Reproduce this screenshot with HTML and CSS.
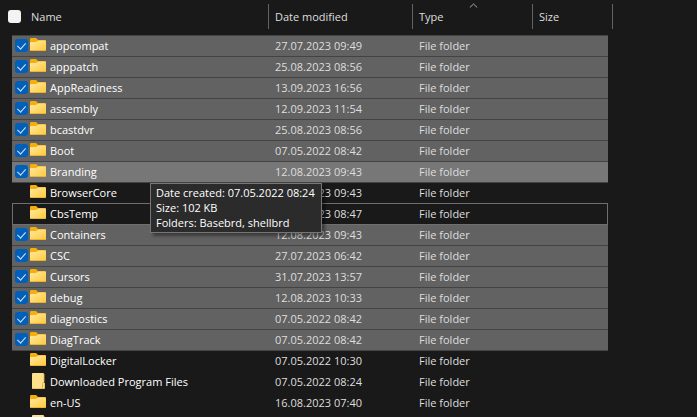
FILE: index.html
```html
<!DOCTYPE html>
<html lang="en">
<head>
    <meta charset="UTF-8">
    <meta name="viewport" content="width=device-width, initial-scale=1.0">
    <title>Windows</title>
    <link rel="stylesheet" href="styles.css">
</head>
<body>
    <!-- Icons -->
    <svg class="sprite" width="0" height="0">
        <defs>
            <linearGradient id="front" x1="0" y1="0" x2="1" y2="1">
                <stop offset="0" stop-color="#ffe9a2"/>
                <stop offset="1" stop-color="#ffc937"/>
            </linearGradient>
            <symbol id="folder" viewBox="0 1 16 16">
                <path d="M0 3.2Q0 2 1.2 2H5.6Q6.2 2 6.7 2.5L8 4H14.8Q16 4 16 5V9H0Z" fill="#f5ae0b"/>
                <path d="M0 6.8Q0 6 1 6H5.6Q6.3 6 6.8 5.6L7.6 5Q8 4.6 8.7 4.6H15Q16 4.6 16 5.6V14Q16 15 15 15H1Q0 15 0 14Z" fill="url(#front)"/>
                <path d="M.5 14.5H15.5" stroke="#e9ad27" stroke-width=".8"/>
            </symbol>
            <symbol id="special" viewBox="0 0 16 16">
                <path d="M2 1Q2 0 3 0H13Q14 0 14 1V10H15V14.5Q15 16 13.5 16H3Q2 16 2 15Z" fill="#fee08b"/>
                <path d="M12.5 15.5V10.5Q12.5 9.5 13.5 9.5H14V1" fill="none" stroke="#dcb043" stroke-width=".9"/>
                <path d="M2.5 15.5H13.5Q14.5 15.5 14.5 14.5V10" fill="none" stroke="#e8bd50" stroke-width=".8"/>
            </symbol>
        </defs>
    </svg>

    <table class="files">
        <colgroup>
            <col class="col-edge">
            <col class="col-name">
            <col class="col-date">
            <col class="col-type">
            <col class="col-size">
            <col class="col-end">
        </colgroup>
        <thead>
            <tr>
                <th colspan="2"><div class="head"><input type="checkbox" class="check" aria-label="Select all"><button>Name</button></div></th>
                <th><div class="head"><button>Date modified</button></div></th>
                <th>
                    <svg class="sort" width="9" height="5" viewBox="0 0 9 5"><path d="M.8 4.5L4.5 1L8.2 4.5" fill="none" stroke="#a8a8a8"/></svg>
                    <div class="head"><button>Type</button></div>
                </th>
                <th colspan="2"><div class="head"><button>Size</button></div></th>
            </tr>
        </thead>
        <tbody>
            <tr class="selected">
                <td></td>
                <td><label class="name"><input type="checkbox" class="check" checked><svg class="icon"><use href="#folder"/></svg>appcompat</label></td>
                <td>27.07.2023 09:49</td><td>File folder</td><td></td><td></td>
            </tr>
            <tr class="selected">
                <td></td>
                <td><label class="name"><input type="checkbox" class="check" checked><svg class="icon"><use href="#folder"/></svg>apppatch</label></td>
                <td>25.08.2023 08:56</td><td>File folder</td><td></td><td></td>
            </tr>
            <tr class="selected">
                <td></td>
                <td><label class="name"><input type="checkbox" class="check" checked><svg class="icon"><use href="#folder"/></svg>AppReadiness</label></td>
                <td>13.09.2023 16:56</td><td>File folder</td><td></td><td></td>
            </tr>
            <tr class="selected">
                <td></td>
                <td><label class="name"><input type="checkbox" class="check" checked><svg class="icon"><use href="#folder"/></svg>assembly</label></td>
                <td>12.09.2023 11:54</td><td>File folder</td><td></td><td></td>
            </tr>
            <tr class="selected">
                <td></td>
                <td><label class="name"><input type="checkbox" class="check" checked><svg class="icon"><use href="#folder"/></svg>bcastdvr</label></td>
                <td>25.08.2023 08:56</td><td>File folder</td><td></td><td></td>
            </tr>
            <tr class="selected">
                <td></td>
                <td><label class="name"><input type="checkbox" class="check" checked><svg class="icon"><use href="#folder"/></svg>Boot</label></td>
                <td>07.05.2022 08:42</td><td>File folder</td><td></td><td></td>
            </tr>
            <tr class="selected hovered">
                <td></td>
                <td>
                    <label class="name"><input type="checkbox" class="check" checked><svg class="icon"><use href="#folder"/></svg>Branding</label>
                    <div class="tooltip" role="tooltip">Date created: 07.05.2022 08:24<br>Size: 102 KB<br>Folders: Basebrd, shellbrd</div>
                </td>
                <td>12.08.2023 09:43</td><td>File folder</td><td></td><td></td>
            </tr>
            <tr>
                <td></td>
                <td><label class="name"><input type="checkbox" class="check"><svg class="icon"><use href="#folder"/></svg>BrowserCore</label></td>
                <td>12.08.2023 09:43</td><td>File folder</td><td></td><td></td>
            </tr>
            <tr class="focused">
                <td></td>
                <td><label class="name"><input type="checkbox" class="check"><svg class="icon"><use href="#folder"/></svg>CbsTemp</label></td>
                <td>12.08.2023 08:47</td><td>File folder</td><td></td><td></td>
            </tr>
            <tr class="selected">
                <td></td>
                <td><label class="name"><input type="checkbox" class="check" checked><svg class="icon"><use href="#folder"/></svg>Containers</label></td>
                <td>12.08.2023 09:43</td><td>File folder</td><td></td><td></td>
            </tr>
            <tr class="selected">
                <td></td>
                <td><label class="name"><input type="checkbox" class="check" checked><svg class="icon"><use href="#folder"/></svg>CSC</label></td>
                <td>27.07.2023 06:42</td><td>File folder</td><td></td><td></td>
            </tr>
            <tr class="selected">
                <td></td>
                <td><label class="name"><input type="checkbox" class="check" checked><svg class="icon"><use href="#folder"/></svg>Cursors</label></td>
                <td>31.07.2023 13:57</td><td>File folder</td><td></td><td></td>
            </tr>
            <tr class="selected">
                <td></td>
                <td><label class="name"><input type="checkbox" class="check" checked><svg class="icon"><use href="#folder"/></svg>debug</label></td>
                <td>12.08.2023 10:33</td><td>File folder</td><td></td><td></td>
            </tr>
            <tr class="selected">
                <td></td>
                <td><label class="name"><input type="checkbox" class="check" checked><svg class="icon"><use href="#folder"/></svg>diagnostics</label></td>
                <td>07.05.2022 08:42</td><td>File folder</td><td></td><td></td>
            </tr>
            <tr class="selected">
                <td></td>
                <td><label class="name"><input type="checkbox" class="check" checked><svg class="icon"><use href="#folder"/></svg>DiagTrack</label></td>
                <td>07.05.2022 08:42</td><td>File folder</td><td></td><td></td>
            </tr>
            <tr>
                <td></td>
                <td><label class="name"><input type="checkbox" class="check"><svg class="icon"><use href="#folder"/></svg>DigitalLocker</label></td>
                <td>07.05.2022 10:30</td><td>File folder</td><td></td><td></td>
            </tr>
            <tr>
                <td></td>
                <td><label class="name"><input type="checkbox" class="check"><svg class="icon"><use href="#special"/></svg>Downloaded Program Files</label></td>
                <td>07.05.2022 08:24</td><td>File folder</td><td></td><td></td>
            </tr>
            <tr>
                <td></td>
                <td><label class="name"><input type="checkbox" class="check"><svg class="icon"><use href="#folder"/></svg>en-US</label></td>
                <td>16.08.2023 07:40</td><td>File folder</td><td></td><td></td>
            </tr>
            <tr>
                <td></td>
                <td><div class="name"><input type="checkbox" class="check" aria-label="Select item"><svg class="icon"><use href="#special"/></svg></div></td>
                <td></td><td></td><td></td><td></td>
            </tr>
        </tbody>
    </table>
</body>
</html>
```

FILE: styles.css
```css
:root {
    --bg: #191919;
    --selected: #626262;
    --hovered: #777777;
    --row-line: #434343;
    --focus: #6f6f6f;
    --accent: #005fb8;
    --text: #ffffff;
    --text-dim: #dedede;
}

* {
    margin: 0;
    padding: 0;
    box-sizing: border-box;
}

body {
    height: 100vh;
    overflow: hidden;
    padding-left: 8px;
    background-color: var(--bg);
    color: var(--text);
    font-family: 'Open Sans', 'Noto Sans', sans-serif;
    font-size: 11px;
    line-height: 15px;
}

.sprite {
    position: absolute;
}

.files {
    width: 605px;
    table-layout: fixed;
    border-collapse: separate;
    border-spacing: 0;
}

.col-edge { width: 4px; }
.col-name { width: 257px; }
.col-date { width: 144px; }
.col-type { width: 120px; }
.col-size { width: 75px; }
.col-end { width: 5px; }

/* Column headers */
th {
    position: relative;
    height: 35px;
    padding: 4px 0 6px;
    font-weight: normal;
    text-align: left;
    color: var(--text-dim);
}

.head {
    display: flex;
    align-items: center;
    gap: 10px;
    height: 25px;
    border-right: 1px solid #636363;
}

th + th .head {
    padding-left: 6px;
}

th button {
    border: none;
    background: none;
    color: inherit;
    font: inherit;
}

.sort {
    position: absolute;
    top: 3px;
    left: calc(50% - 4px);
}

/* Rows */
td {
    height: 21px;
    padding: 0 0 2px 6px;
    border-top: 1px solid transparent;
    color: var(--text-dim);
    white-space: nowrap;
}

td:first-child,
td:nth-child(2),
td:last-child {
    padding-left: 0;
}

td:nth-child(2) {
    position: relative;
    color: var(--text);
}

.name {
    display: flex;
    align-items: center;
    height: 18px;
    padding-left: 3px;
}

.icon {
    width: 16px;
    height: 16px;
    margin: 0 4px 0 2px;
}

.selected td:not(:first-child, :last-child) {
    background-color: var(--selected);
    border-top-color: var(--row-line);
    box-shadow: 0 1px 0 var(--row-line);
}

.selected.hovered td:not(:first-child, :last-child) {
    background-color: var(--hovered);
}

.focused td:not(:first-child, :last-child),
.focused + tr td:not(:first-child, :last-child) {
    border-top-color: var(--focus);
}

.focused td:nth-child(2) {
    box-shadow: inset 1px 0 0 var(--focus);
}

.focused td:nth-child(5) {
    border-right: 1px solid var(--focus);
}

/* Checkboxes */
.check {
    appearance: none;
    display: flex;
    justify-content: center;
    width: 13px;
    height: 13px;
    border-radius: 3px;
    background-color: #f3f3f3;
}

td .check {
    visibility: hidden;
    margin-top: 1px;
}

td .check:checked {
    visibility: visible;
    background-color: var(--accent);
}

.check:checked::after {
    content: '';
    width: 4px;
    height: 7px;
    margin-top: 2px;
    border: solid #d5e6f6;
    border-width: 0 1px 1px 0;
    transform: rotate(42deg);
}

.tooltip {
    position: absolute;
    z-index: 1;
    top: 21px;
    left: 138px;
    padding: 1px 6px 2px 5px;
    border: 1px solid #767676;
    background-color: #2b2b2b;
    box-shadow: 3px 3px 3px rgba(0, 0, 0, 0.4);
    color: var(--text);
}
```
